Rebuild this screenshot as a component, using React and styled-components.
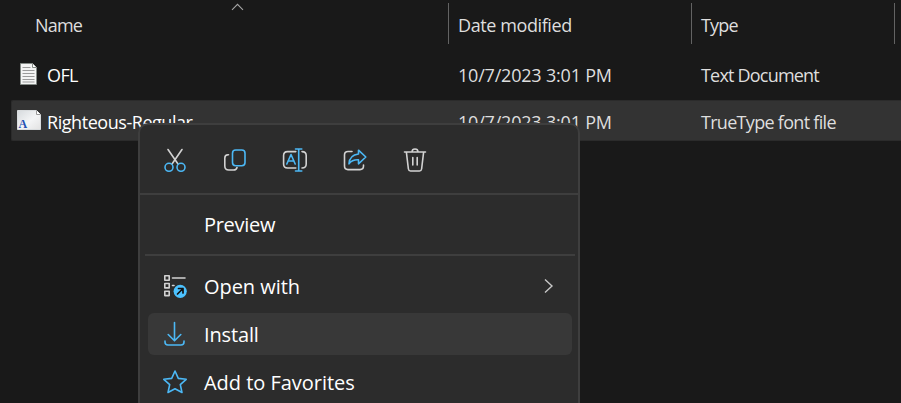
import React from 'react';
import styled, { createGlobalStyle } from 'styled-components';

const Global = createGlobalStyle`
  * { box-sizing: border-box; }
  html, body { margin: 0; background: #191919; overflow: hidden; }
`;

const Explorer = styled.main`
  position: relative;
  width: 901px;
  height: 403px;
  overflow: hidden;
  background: #191919;
  color: #dedede;
  font: 18px/24px "Open Sans", "Noto Sans", sans-serif;
`;

const HeaderRow = styled.div`
  display: grid;
  grid-template-columns: 449px 243px 203px;
  padding-top: 3px;
  height: 54px;
`;

const HeaderCell = styled.div`
  position: relative;
  height: 41px;
  border-right: 1px solid #636363;
  padding: 10px 0 0 ${(p) => (p.$first ? 35 : 9)}px;
  white-space: nowrap;
`;

const SortArrow = styled.svg`
  position: absolute;
  left: 231px;
  top: 0;
`;

const FileRow = styled.div`
  display: grid;
  grid-template-columns: 438px 243px 209px;
  align-items: center;
  margin-left: 11px;
  height: ${(p) => (p.$selected ? 41 : 42)}px;
  margin-bottom: ${(p) => (p.$selected ? 0 : 4)}px;
  padding-top: ${(p) => (p.$selected ? 2 : 0)}px;
  background: ${(p) => (p.$selected ? '#333333' : 'transparent')};
  border: solid ${(p) => (p.$selected ? '#2b2b2b' : 'transparent')};
  border-width: 1px 0 1px 1px;
  border-radius: 2px 0 0 2px;
  white-space: nowrap;
`;

const NameCell = styled.div`
  display: flex;
  align-items: center;
  height: 24px;
  color: #fff;
`;

const FileIcon = styled.span`
  display: flex;
  justify-content: center;
  width: 24px;
  margin: 0 6px 3px 5px;
`;

const Cell = styled.div`
  padding-left: 8px;
`;

const Label = styled.span`
  display: inline-block;
  letter-spacing: ${(p) => p.$track || 0}px;
`;

const MenuLabel = styled(Label)`
  padding-top: 2px;
`;

const Menu = styled.section`
  position: absolute;
  left: 138px;
  top: 123px;
  width: 442px;
  height: 300px;
  background: #2c2c2c;
  border: 2px solid #3e3e3e;
  border-radius: 10px;
  color: #fff;
  font-size: 20px;
  line-height: 28px;
`;

const CommandBar = styled.div`
  display: flex;
  height: 70px;
  padding: 20px 0 0 20px;
  gap: 30px;
  border-bottom: 2px solid #3e3e3e;
`;

const Icon = styled.svg`
  display: block;
  flex: none;
  width: 30px;
  height: 30px;
  fill: none;
  stroke: ${(p) => (p.$blue ? '#4cb8f5' : '#d2d2d2')};
  stroke-width: 1.6;
  stroke-linecap: round;
  stroke-linejoin: round;
`;

const Divider = styled.hr`
  height: 2px;
  margin: 8px 3px 0 5px;
  border: 0;
  background: #3e3e3e;
`;

const MenuItem = styled.div`
  display: flex;
  align-items: center;
  height: 42px;
  margin: ${(p) => p.$top || 0}px 6px 0 8px;
  padding-left: 12px;
  border-radius: 6px;
  background: ${(p) => (p.$active ? '#383838' : 'transparent')};
`;

const IconSlot = styled.span`
  width: 30px;
  margin-right: 14px;
`;

const Chevron = styled.svg`
  margin-left: auto;
  margin-right: 17px;
`;

const blue = '#4cb8f5';

const TextFile = () => (
  <svg width="18" height="22" viewBox="0 0 18 22">
    <path d="M.5.5H12.5L16.5 4.5V21.5H.5Z" fill="#f4f4f4" stroke="#858b87" />
    <path d="M12.5.5V4.5H16.5" fill="#fff" stroke="#858b87" />
    <path d="M2.5 4.5H10.5M2.5 7.5H14.5M2.5 10.5H14.5M2.5 13.5H14.5M2.5 16.5H14.5M2.5 19H14.5" stroke="#9b9b9b" />
  </svg>
);

const FontFile = () => (
  <svg width="24" height="20" viewBox="0 0 24 20">
    <defs>
      <linearGradient id="page" x1="0" y1="0" x2="1" y2="1">
        <stop offset="0" stopColor="#d6dadd" />
        <stop offset=".55" stopColor="#f4f5f6" />
        <stop offset="1" stopColor="#e2e2e2" />
      </linearGradient>
    </defs>
    <path d="M.5.5H19.5L23.5 4.5V19.5H.5Z" fill="url(#page)" stroke="#d9dcde" />
    <path d="M19.5 .5V4.5H23.5" fill="#fff" stroke="#999" />
    <text x="1.5" y="18" fill="#2450b4" fontFamily="Liberation Serif, serif" fontWeight="700" fontSize="12">A</text>
  </svg>
);

const Commands = () => (
  <CommandBar>
    <Icon viewBox="0 0 30 30">
      <path d="M8 4.5L18 19M22 4.5L12 19" />
      <g stroke={blue}><circle cx="9" cy="22.3" r="4" /><circle cx="21" cy="22.3" r="4" /></g>
    </Icon>
    <Icon viewBox="0 0 30 30">
      <path d="M8.5 9.8H8Q4.8 10 4.8 13V21Q4.8 25 8.8 25H13.5Q16.5 25 17 22.5" />
      <rect x="12.5" y="5" width="12.5" height="15.8" rx="3.2" stroke={blue} />
    </Icon>
    <Icon viewBox="0 0 30 30">
      <path d="M15.8 6.6H7.5Q3.6 6.6 3.6 10.5V19Q3.6 23 7.5 23H15.8M22 6.6Q26.2 6.6 26.2 10.5V19Q26.2 23 22 23" />
      <path d="M6.8 19L11 9.5L15.2 19M8 16H14M18.7 4V26M15.5 4H21.8M15.5 26H21.8" stroke={blue} />
    </Icon>
    <Icon viewBox="0 0 30 30">
      <path d="M12 6.5H8Q4.5 6.5 4.5 10V21Q4.5 24.6 8 24.6H20Q23.5 24.6 23.5 21V20" />
      <path d="M18.5 5.2L25.8 12L18.5 18.8V14.8Q12 14.5 9 18.8Q9.5 10 18.5 9Z" stroke={blue} />
    </Icon>
    <Icon viewBox="0 0 30 30">
      <path d="M4.5 7H25.5M12 6.7Q12.2 4 15 4T18 6.7M6.4 7.3L8.4 24Q8.7 26 10.5 26H19.5Q21.3 26 21.6 24L23.6 7.3M12.8 12.5V20M17.2 12.5V20" />
    </Icon>
  </CommandBar>
);

export default function App() {
  return (
    <>
      <Global />
      <Explorer>
        <HeaderRow>
          <HeaderCell $first>
            <SortArrow width="13" height="10" viewBox="0 0 13 10">
              <path d="M1 6.8L6.5 1.3L12 6.8" fill="none" stroke="#a5a5a5" strokeWidth="1.1" />
            </SortArrow>
            <Label $track={-0.8}>Name</Label>
          </HeaderCell>
          <HeaderCell><Label $track={-0.4}>Date modified</Label></HeaderCell>
          <HeaderCell><Label $track={-0.8}>Type</Label></HeaderCell>
        </HeaderRow>
        <FileRow>
          <NameCell><FileIcon><TextFile /></FileIcon><Label $track={-0.6}>OFL</Label></NameCell>
          <Cell><Label $track={-0.2}>10/7/2023 3:01 PM</Label></Cell>
          <Cell><Label $track={-0.8}>Text Document</Label></Cell>
        </FileRow>
        <FileRow $selected>
          <NameCell><FileIcon><FontFile /></FileIcon><Label $track={-0.45}>Righteous-Regular</Label></NameCell>
          <Cell><Label $track={-0.2}>10/7/2023 3:01 PM</Label></Cell>
          <Cell><Label $track={-0.7}>TrueType font file</Label></Cell>
        </FileRow>
        <Menu>
          <Commands />
          <MenuItem $top={9}><IconSlot /><Label $track={-0.3}>Preview</Label></MenuItem>
          <Divider />
          <MenuItem $top={9}>
            <IconSlot>
              <Icon viewBox="0 0 30 30">
                <path d="M4.8 4.8H9.2V9.2H4.8ZM4.8 12.5H9.2V16.9H4.8ZM4.8 20.2H9.2V24.6H4.8ZM12.5 7H25M12.5 14.5H14" />
                <circle cx="20.2" cy="20.3" r="6.6" fill="#4cc2ff" stroke="none" />
                <path d="M17.5 23L23 17.5M18.5 17.5H23V22" stroke="#111" strokeWidth="1.7" />
              </Icon>
            </IconSlot>
            <MenuLabel $track={-0.05}>Open with</MenuLabel>
            <Chevron width="12" height="16" viewBox="0 0 12 16">
              <path d="M2 1.5L9 8L2 14.5" fill="none" stroke="#c8c8c8" strokeWidth="1.4" />
            </Chevron>
          </MenuItem>
          <MenuItem $active $top={6}>
            <IconSlot>
              <Icon $blue viewBox="0 0 30 30">
                <path d="M14.5 3.5V21.5M8.2 15.5L14.5 21.8L20.8 15.5M5 22V23Q5 26 8 26H21Q24 26 24 23V22" />
              </Icon>
            </IconSlot>
            <MenuLabel $track={-0.15}>Install</MenuLabel>
          </MenuItem>
          <MenuItem $top={6}>
            <IconSlot>
              <Icon $blue viewBox="0 0 30 30">
                <path d="M15 4L18.3 11.4L26.2 12.3L20.3 17.6L22 25.5L15 21.7L8 25.5L9.7 17.6L3.8 12.3L11.7 11.4Z" />
              </Icon>
            </IconSlot>
            <MenuLabel $track={-0.03}>Add to Favorites</MenuLabel>
          </MenuItem>
        </Menu>
      </Explorer>
    </>
  );
}
